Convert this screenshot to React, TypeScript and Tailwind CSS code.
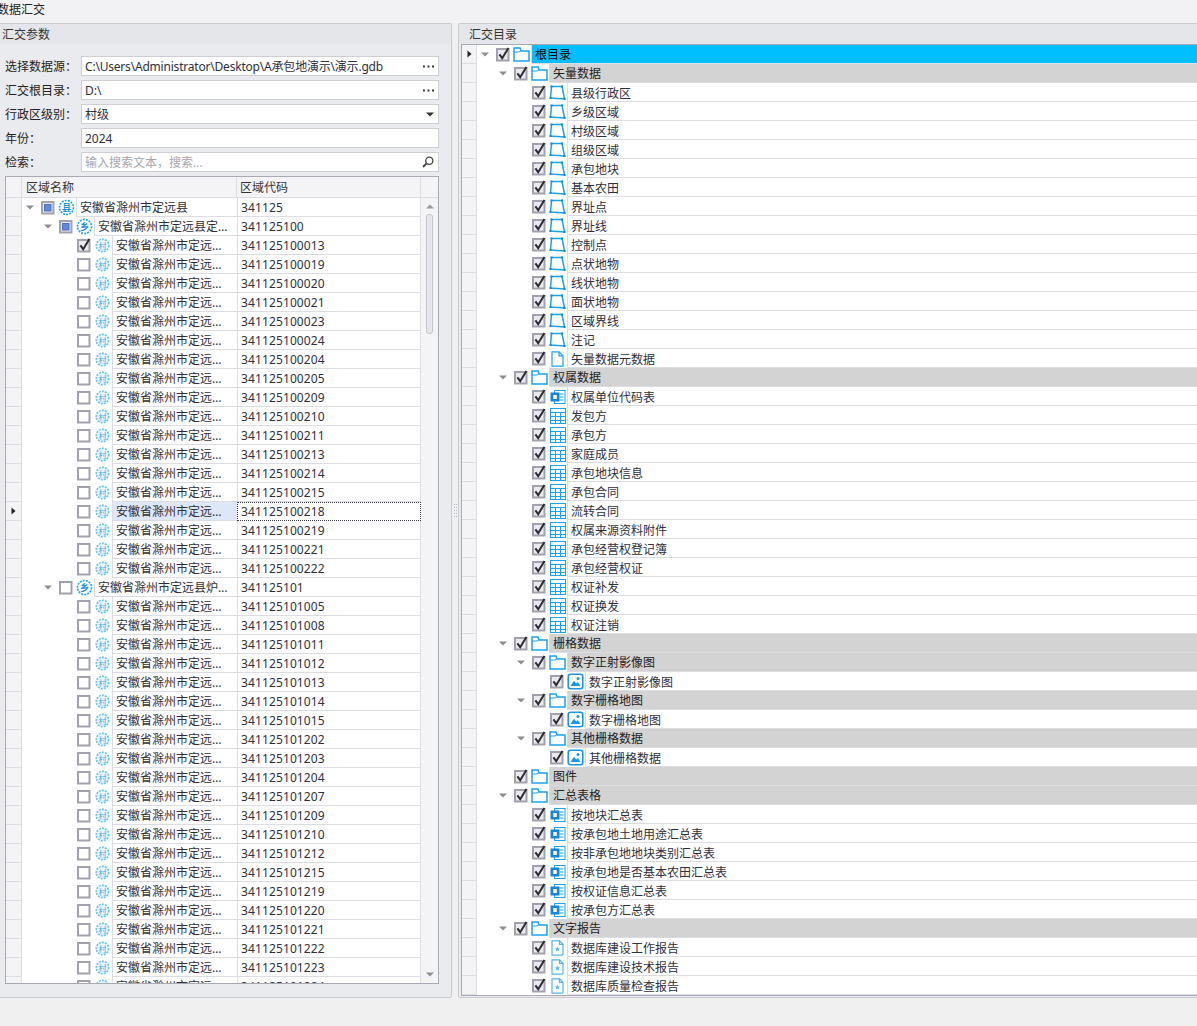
import React from 'react';

type IconKind = 'folder' | 'poly' | 'file' | 'link' | 'table' | 'image' | 'doc' | 'county' | 'town' | 'village';
type CheckState = 'on' | 'off' | 'mixed';
type Tone = 'plain' | 'root' | 'group' | 'selected';

const indents = ['pl-0', 'pl-[18px]', 'pl-[36px]', 'pl-[54px]'];
const lineColor = 'border-[#dcdce3]';

const RowArrow = () => (
  <svg width="5" height="8" viewBox="0 0 5 8">
    <path d="M0.5 0.5L4.5 4L0.5 7.5z" fill="#222" />
  </svg>
);

const Expander = () => (
  <svg width="8" height="5" viewBox="0 0 8 5">
    <path d="M0 0.5h8L4 4.5z" fill="#8e8e96" />
  </svg>
);

const CheckBox: React.FC<{ state: CheckState }> = ({ state }) => (
  <svg width="15" height="15" viewBox="0 0 15 15">
    <rect x="1" y="2" width="11.5" height="11.5" fill={state === 'off' ? '#fff' : '#e9e9ef'} stroke="#a2a2ae" strokeWidth="2" />
    {state === 'on' && <path d="M3.4 7.4L6.2 11.2L12.4 1" fill="none" stroke="#2c2c30" strokeWidth="2" />}
    {state === 'mixed' && <rect x="3.5" y="4.5" width="6.5" height="6.5" fill="#6288d8" stroke="#4b70c4" />}
  </svg>
);

const RegionIcon: React.FC<{ text: string; light?: boolean }> = ({ text, light }) => (
  <svg width="17" height="17" viewBox="0 0 17 17">
    <circle
      cx="8.5"
      cy="8.5"
      r={light ? 6.2 : 7}
      fill={light ? '#e9f7fe' : '#fff'}
      stroke={light ? '#63c6f7' : '#1fa8f2'}
      strokeWidth="1.7"
      strokeDasharray="2 1.1"
    />
    <text x="8.5" y="11.5" textAnchor="middle" fontSize={light ? 8 : 9} fontWeight={light ? 400 : 700} fill={light ? '#38a8ee' : '#1b8fe0'}>
      {text}
    </text>
  </svg>
);

const TreeIcon: React.FC<{ kind: IconKind }> = ({ kind }) => {
  const blue = '#1ba2f2';
  switch (kind) {
    case 'folder':
      return (
        <svg width="17" height="15" viewBox="0 0 17 15" fill="none" stroke={blue} strokeWidth="1.5">
          <path d="M1 1h6l1 3h8v10H1z" />
          <path d="M1 5h5l1.5-1" strokeWidth="1" />
        </svg>
      );
    case 'poly':
      return (
        <svg width="17" height="17" viewBox="0 0 17 17" fill="none" stroke={blue} strokeWidth="1.5">
          <path d="M2.5 2.5L13 2.5L15.5 15L1.5 14z" />
          <rect x="1.5" y="1.5" width="2" height="2" fill="#1488d8" stroke="none" />
          <rect x="12" y="1.5" width="2" height="2" fill="#1488d8" stroke="none" />
          <rect x="14.5" y="14" width="2" height="2" fill="#1488d8" stroke="none" />
          <rect x="0.5" y="13" width="2" height="2" fill="#1488d8" stroke="none" />
        </svg>
      );
    case 'file':
      return (
        <svg width="15" height="16" viewBox="0 0 15 16" fill="none" stroke={blue} strokeWidth="1.2">
          <path d="M2 0.8h7l4 4v10.4H2z" />
          <path d="M9 0.8v4h4" />
        </svg>
      );
    case 'link':
      return (
        <svg width="16" height="16" viewBox="0 0 16 16">
          <rect x="4.5" y="1.5" width="10.5" height="13" fill="#fff" stroke={blue} />
          <path d="M10 5h3.5M10 8h3.5M10 11h3.5" stroke={blue} />
          <rect x="0.5" y="3.5" width="9" height="9" fill="#1488d8" />
          <rect x="3.3" y="6" width="3.5" height="4" fill="#fff" />
        </svg>
      );
    case 'table':
      return (
        <svg width="16" height="16" viewBox="0 0 16 16" fill="none" stroke={blue}>
          <rect x="0.5" y="0.5" width="15" height="15" />
          <path d="M0.5 4.5h15M0.5 8.5h15M0.5 12.5h15M5.5 4.5v11M10.5 4.5v11" />
        </svg>
      );
    case 'image':
      return (
        <svg width="17" height="17" viewBox="0 0 17 17">
          <rect x="1.2" y="1.2" width="14.6" height="14.6" rx="2.5" fill="#fff" stroke="#1b96e4" strokeWidth="1.6" />
          <path d="M3.5 13L7 7.8L9.2 10.5L10.8 9L13.5 13z" fill="#1b96e4" />
          <circle cx="11" cy="5.6" r="1.5" fill="#1b96e4" />
        </svg>
      );
    case 'doc':
      return (
        <svg width="15" height="16" viewBox="0 0 15 16" fill="none" stroke="#4fb4ee" strokeWidth="1.2">
          <path d="M2 0.8h7.5l3.5 3.5v9.5a1.4 1.4 0 0 1-1.4 1.4H2z" />
          <path d="M9.5 0.8v3.5h3.5" />
          <path d="M7.5 6.5l0.8 1.7 1.8 0.2-1.3 1.2 0.4 1.8-1.7-0.9-1.7 0.9 0.4-1.8-1.3-1.2 1.8-0.2z" fill="#5cb8ef" stroke="none" />
        </svg>
      );
    case 'county':
      return <RegionIcon text="县" />;
    case 'town':
      return <RegionIcon text="乡" />;
    default:
      return <RegionIcon text="村" light />;
  }
};

const TreePart: React.FC<{ level: number; open?: boolean; check: CheckState; icon: IconKind }> = ({
  level,
  open,
  check,
  icon,
}) => (
  <div className={`flex h-full shrink-0 items-center bg-white ${indents[level]}`}>
    <div className="flex w-[18px] justify-center pr-[2px]">{open && <Expander />}</div>
    <div className="flex w-[17px] justify-center">
      <CheckBox state={check} />
    </div>
    <div className="flex w-[19px] justify-center">
      <TreeIcon kind={icon} />
    </div>
  </div>
);

const Indicator: React.FC<{ current?: boolean; narrow?: boolean }> = ({ current, narrow }) => (
  <div
    className={`flex h-full shrink-0 items-center justify-center border-r border-b bg-[#f4f4f7] ${lineColor} ${
      narrow ? 'w-[15px]' : 'w-[16px]'
    }`}
  >
    {current && <RowArrow />}
  </div>
);

const toneClass: Record<Tone, string> = {
  plain: 'bg-white pt-[2px]',
  root: 'bg-[#00bfff] pt-px text-black',
  group: 'bg-[#d3d3d3] pt-px text-[#222]',
  selected: 'bg-[#dee7f8] pt-px',
};

type RegionRow = { level: number; name: string; code: string; check: CheckState; icon: IconKind };

const village = (code: string, check: CheckState = 'off'): RegionRow => ({
  level: 2,
  name: '安徽省滁州市定远…',
  code,
  check,
  icon: 'village',
});

const regionRows: RegionRow[] = [
  { level: 0, name: '安徽省滁州市定远县', code: '341125', check: 'mixed', icon: 'county' },
  { level: 1, name: '安徽省滁州市定远县定…', code: '341125100', check: 'mixed', icon: 'town' },
  village('341125100013', 'on'),
  ...['019', '020', '021', '023', '024', '204', '205', '209', '210', '211', '213', '214', '215', '218', '219', '221', '222'].map(
    (s) => village('341125100' + s),
  ),
  { level: 1, name: '安徽省滁州市定远县炉…', code: '341125101', check: 'off', icon: 'town' },
  ...['005', '008', '011', '012', '013', '014', '015', '202', '203', '204', '207', '209', '210', '212', '215', '219', '220', '221', '222', '223', '224'].map(
    (s) => village('341125101' + s),
  ),
];

type DirRow = { level: number; label: string; icon: IconKind; open?: boolean; tone?: Tone };

const leaves = (labels: string[], icon: IconKind): DirRow[] => labels.map((label) => ({ level: 2, label, icon }));
const group = (label: string, open = true): DirRow => ({ level: 1, label, icon: 'folder', open, tone: 'group' });
const rasterGroup = (label: string): DirRow[] => [
  { level: 2, label, icon: 'folder', open: true, tone: 'group' },
  { level: 3, label, icon: 'image' },
];

const dirRows: DirRow[] = [
  { level: 0, label: '根目录', icon: 'folder', open: true, tone: 'root' },
  group('矢量数据'),
  ...leaves(
    ['县级行政区', '乡级区域', '村级区域', '组级区域', '承包地块', '基本农田', '界址点', '界址线', '控制点', '点状地物', '线状地物', '面状地物', '区域界线', '注记'],
    'poly',
  ),
  { level: 2, label: '矢量数据元数据', icon: 'file' },
  group('权属数据'),
  { level: 2, label: '权属单位代码表', icon: 'link' },
  ...leaves(
    ['发包方', '承包方', '家庭成员', '承包地块信息', '承包合同', '流转合同', '权属来源资料附件', '承包经营权登记簿', '承包经营权证', '权证补发', '权证换发', '权证注销'],
    'table',
  ),
  group('栅格数据'),
  ...rasterGroup('数字正射影像图'),
  ...rasterGroup('数字栅格地图'),
  ...rasterGroup('其他栅格数据'),
  group('图件', false),
  group('汇总表格'),
  ...leaves(['按地块汇总表', '按承包地土地用途汇总表', '按非承包地地块类别汇总表', '按承包地是否基本农田汇总表', '按权证信息汇总表', '按承包方汇总表'], 'link'),
  group('文字报告'),
  ...leaves(['数据库建设工作报告', '数据库建设技术报告', '数据库质量检查报告'], 'doc'),
];

const Dots = () => (
  <svg width="11" height="3" viewBox="0 0 11 3" fill="#3a3a44" className="mr-[1px]">
    <rect x="0" y="0.5" width="2" height="2" />
    <rect x="4.5" y="0.5" width="2" height="2" />
    <rect x="9" y="0.5" width="2" height="2" />
  </svg>
);

const FormRow: React.FC<{ label: string; value: string; muted?: boolean; tight?: boolean; action?: React.ReactNode }> = ({
  label,
  value,
  muted,
  tight,
  action,
}) => (
  <div className="flex h-5 items-center">
    <div className="w-[76px] shrink-0 pt-px text-[#222]">{label}</div>
    <div className="flex h-full flex-1 items-center justify-between border border-[#cdcdd3] bg-white px-[3px]">
      <span className={`pt-px ${muted ? 'text-[#a6a6ae]' : ''} ${tight ? 'tracking-[-0.2px]' : ''}`}>{value}</span>
      {action}
    </div>
  </div>
);

const PanelHeader: React.FC<{ title: string; className: string }> = ({ title, className }) => (
  <div className={`flex h-[20px] shrink-0 items-center bg-[#e5e6e9] pt-px text-[#333] ${className}`}>{title}</div>
);

const App: React.FC = () => {
  return (
    <div
      className="flex h-[1026px] w-[1197px] flex-col overflow-hidden bg-[#f0f0f1] text-[12px] leading-[18px] text-[#2f2f3c]"
      style={{ fontFamily: '"Noto Sans", "Noto Sans CJK SC", sans-serif' }}
    >
      <div className="-ml-[3px] flex h-[23px] shrink-0 items-start bg-[#f2f2f4] pt-px text-[#222]">数据汇交</div>

      <div className="flex h-[975px] shrink-0">
        {/* left: params and region grid */}
        <div className="-ml-[2px] flex w-[454px] shrink-0 flex-col rounded-[2px] border border-[#c9c9d0] bg-[#eaebee]">
          <PanelHeader title="汇交参数" className="pl-[3px]" />
          <div className="flex min-h-0 flex-1 flex-col pt-[12px] pr-[12px] pb-[13px] pl-[6px]">
            <div className="flex flex-col gap-1">
              <FormRow label="选择数据源：" value="C:\Users\Administrator\Desktop\A承包地演示\演示.gdb" tight action={<Dots />} />
              <FormRow label="汇交根目录：" value="D:\" action={<Dots />} />
              <FormRow
                label="行政区级别："
                value="村级"
                action={
                  <svg width="8" height="5" viewBox="0 0 8 5" className="mr-[1px]">
                    <path d="M0 0.5h8L4 4.5z" fill="#333" />
                  </svg>
                }
              />
              <FormRow label="年份：" value="2024" />
              <FormRow
                label="检索："
                value="输入搜索文本，搜索…"
                muted
                action={
                  <svg width="12" height="12" viewBox="0 0 12 12" fill="none" stroke="#444" strokeWidth="1.3" className="mr-[1px]">
                    <circle cx="7.3" cy="4.7" r="3.6" />
                    <path d="M4.6 7.4L1 11" strokeWidth="1.8" />
                  </svg>
                }
              />
            </div>

            <div className="mt-1 flex min-h-0 flex-1 flex-col border border-[#a9a9b4] bg-white">
              <div className="flex h-[21px] shrink-0 bg-[#f4f4f7] text-[#333]">
                <div className={`w-[16px] shrink-0 border-r border-b ${lineColor}`} />
                <div className={`flex w-[215px] shrink-0 items-center border-r border-b pt-px pl-[4px] ${lineColor}`}>区域名称</div>
                <div className={`flex w-[184px] shrink-0 items-center border-r border-b pt-px pl-[3px] ${lineColor}`}>区域代码</div>
                <div className={`flex-1 border-b ${lineColor}`} />
              </div>
              <div className="flex min-h-0 flex-1">
                <div className="min-h-0 w-[415px] shrink-0 overflow-hidden">
                  {regionRows.map((row) => {
                    const current = row.code === '341125100218';
                    return (
                      <div key={row.code} className="flex h-[19px]">
                        <Indicator current={current} />
                        <div className="flex w-[215px] shrink-0">
                          <TreePart level={row.level} open={row.level < 2} check={row.check} icon={row.icon} />
                          <div className={`flex-1 truncate border-b border-l pt-px pl-[3px] ${lineColor} ${current ? 'bg-[#dee7f8]' : 'bg-white'}`}>
                            {row.name}
                          </div>
                        </div>
                        <div
                          className={
                            current
                              ? 'w-[184px] shrink-0 border border-dotted border-[#3c3c44] pl-[3px] tracking-[0.12px]'
                              : `w-[184px] shrink-0 border-r border-b border-l pt-px pl-[3px] tracking-[0.12px] ${lineColor}`
                          }
                        >
                          {row.code}
                        </div>
                      </div>
                    );
                  })}
                </div>
                <div className="flex flex-1 flex-col items-center bg-[#f4f4f7] pt-[6px] pb-[6px]">
                  <svg width="8" height="5" viewBox="0 0 8 5">
                    <path d="M0 4.5h8L4 0.5z" fill="#9a9aa2" />
                  </svg>
                  <div className="mt-[5px] h-[120px] w-[7px] rounded-[3px] border border-[#c4c4cb] bg-[#e6e6ea]" />
                  <svg width="8" height="5" viewBox="0 0 8 5" className="mt-auto">
                    <path d="M0 0.5h8L4 4.5z" fill="#8e8e96" />
                  </svg>
                </div>
              </div>
            </div>
          </div>
        </div>

        {/* splitter */}
        <div className="flex w-[6px] shrink-0 items-center justify-center">
          <svg width="3" height="14" viewBox="0 0 3 14" fill="#b5b5bd">
            <rect x="0" y="0" width="1" height="1" />
            <rect x="2" y="0" width="1" height="1" />
            <rect x="0" y="3" width="1" height="1" />
            <rect x="2" y="3" width="1" height="1" />
            <rect x="0" y="6" width="1" height="1" />
            <rect x="2" y="6" width="1" height="1" />
            <rect x="0" y="9" width="1" height="1" />
            <rect x="2" y="9" width="1" height="1" />
            <rect x="0" y="12" width="1" height="1" />
            <rect x="2" y="12" width="1" height="1" />
          </svg>
        </div>

        {/* right: directory tree */}
        <div className="flex w-[760px] shrink-0 flex-col rounded-[2px] border border-[#c9c9d0] bg-[#eaebee]">
          <PanelHeader title="汇交目录" className="pl-[10px]" />
          <div className="flex min-h-0 flex-1 flex-col pb-px pl-[2px]">
            <div className="min-h-0 flex-1 overflow-hidden border-t border-b border-l border-[#a9a9b4] bg-white">
              {dirRows.map((row, i) => (
                <div key={i} className="flex h-[19px]">
                  <Indicator current={i === 0} narrow />
                  <TreePart level={row.level} open={row.open} check="on" icon={row.icon} />
                  <div className={`flex-1 truncate border-b border-l pl-[3px] ${lineColor} ${toneClass[row.tone ?? 'plain']}`}>
                    {row.label}
                  </div>
                </div>
              ))}
            </div>
          </div>
        </div>
      </div>
    </div>
  );
};

export default App;
